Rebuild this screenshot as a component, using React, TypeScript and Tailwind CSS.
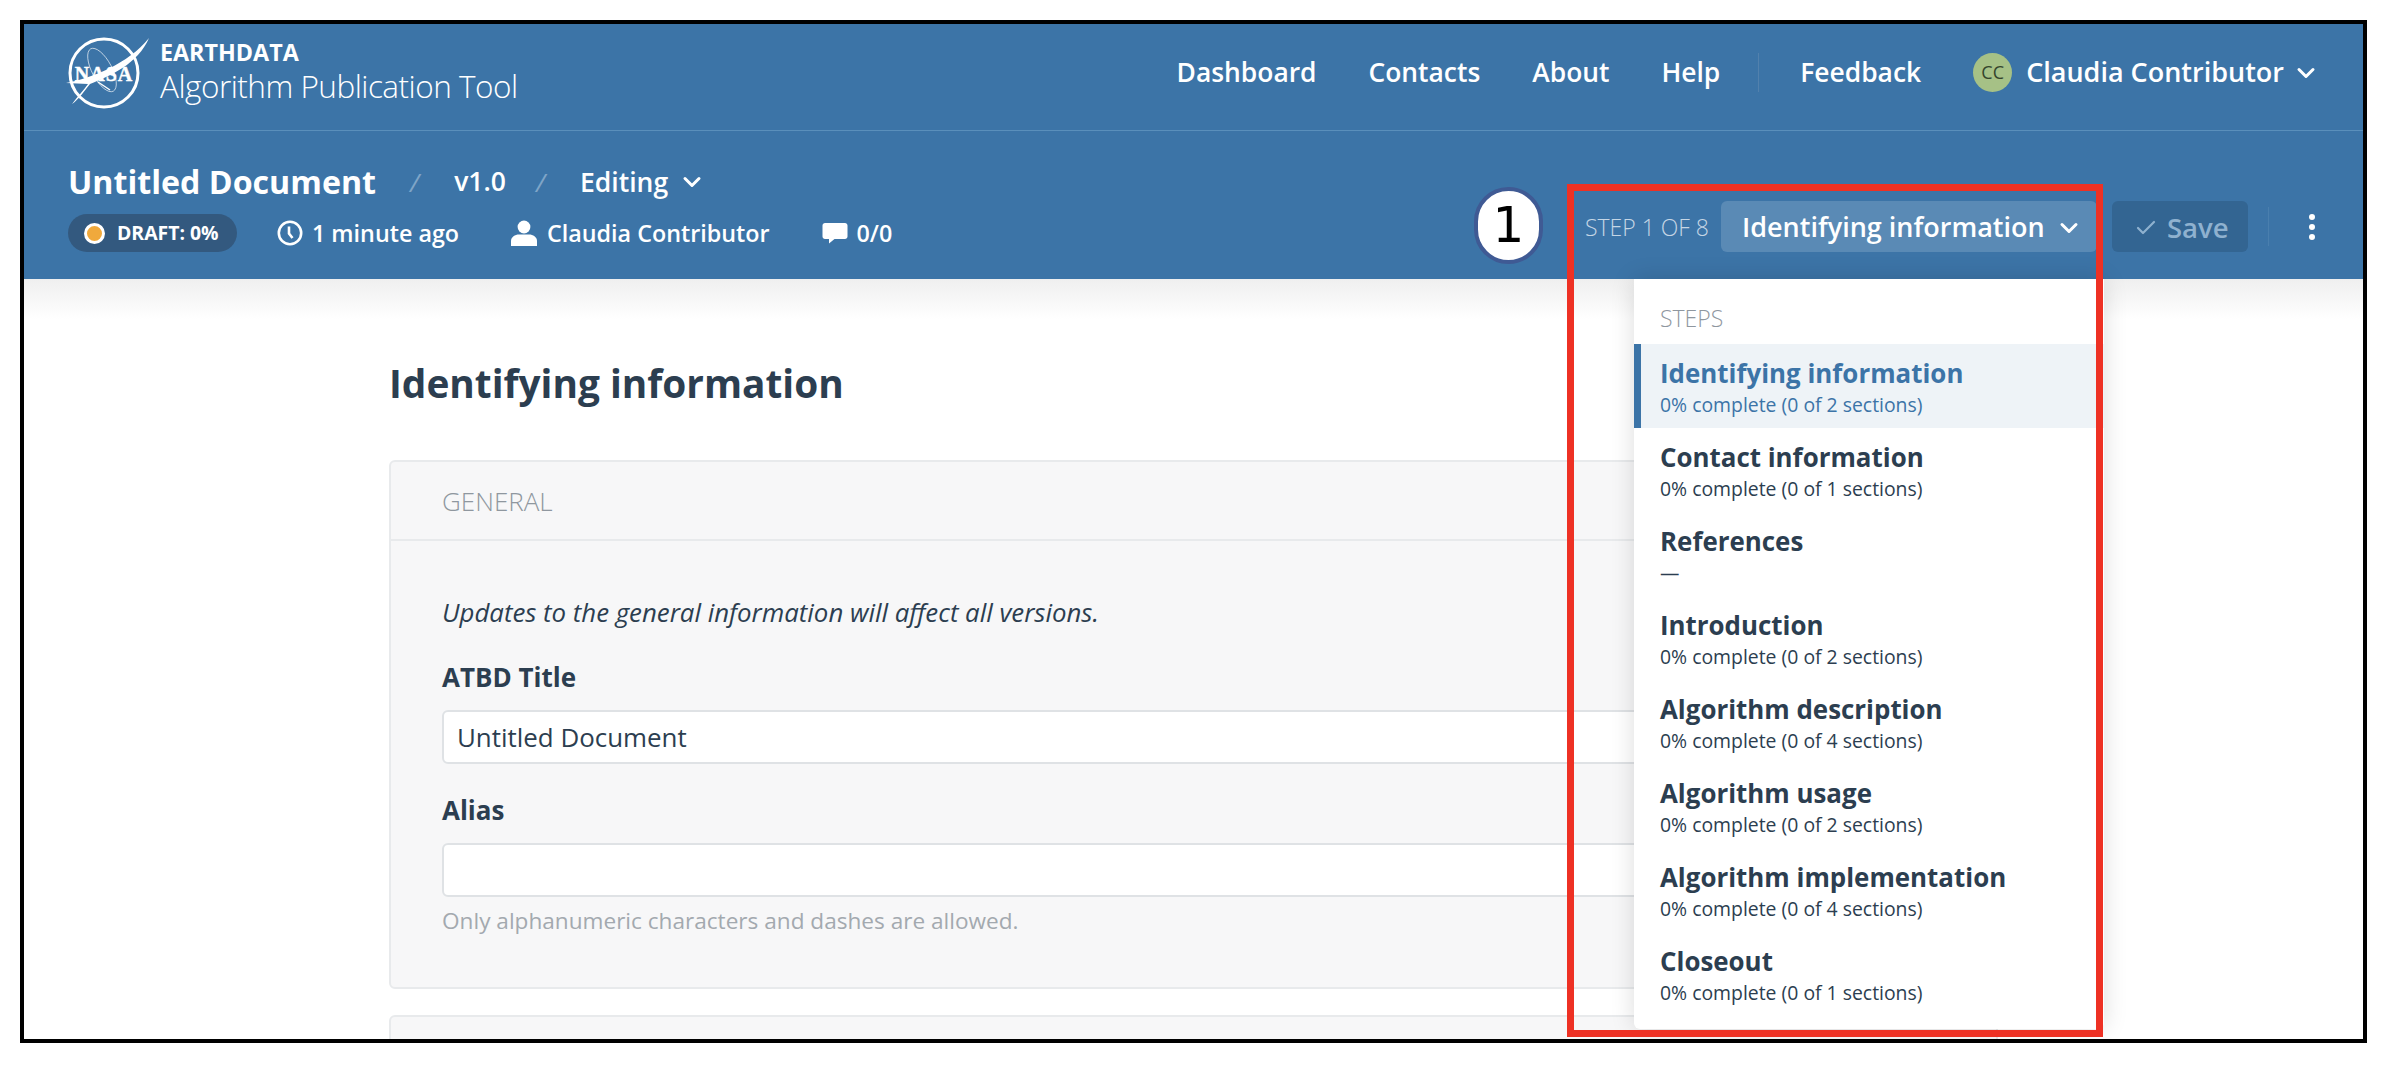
import { Check, ChevronDown } from "lucide-react";

const sans = { fontFamily: '"Open Sans", sans-serif' };

const navLinks = ["Dashboard", "Contacts", "About", "Help"];

const steps = [
  { title: "Identifying information", note: "0% complete (0 of 2 sections)", active: true },
  { title: "Contact information", note: "0% complete (0 of 1 sections)" },
  { title: "References", note: "—" },
  { title: "Introduction", note: "0% complete (0 of 2 sections)" },
  { title: "Algorithm description", note: "0% complete (0 of 4 sections)" },
  { title: "Algorithm usage", note: "0% complete (0 of 2 sections)" },
  { title: "Algorithm implementation", note: "0% complete (0 of 4 sections)" },
  { title: "Closeout", note: "0% complete (0 of 1 sections)" },
];

function NasaLogo() {
  return (
    <svg viewBox="0 0 84 74" className="h-[74px] w-[84px] shrink-0" fill="none">
      <circle cx="38" cy="37" r="34" stroke="white" strokeWidth="3" />
      <ellipse cx="36" cy="34" rx="10" ry="24" stroke="white" strokeWidth="0.8" transform="rotate(-28 36 34)" opacity="0.75" />
      <path d="M0 47 C 26 42 62 28 83 2 C 72 28 44 40 24 48 C 16 58 12 64 6 68 C 12 60 18 54 22 48 Z" fill="white" />
      <path d="M32 46 L44 54" stroke="white" strokeWidth="1.4" />
      <text x="38" y="45" textAnchor="middle" fontFamily='"Liberation Serif", serif' fontWeight="700" fontSize="20" letterSpacing="1" fill="white" stroke="white" strokeWidth="0.4">NASA</text>
    </svg>
  );
}

function ClockIcon() {
  return (
    <svg viewBox="0 0 26 26" className="h-[26px] w-[26px]" fill="none" stroke="white">
      <circle cx="13" cy="13" r="11.2" strokeWidth="2.6" />
      <path d="M12 6.5V13.5L15.5 18" strokeWidth="2.6" />
    </svg>
  );
}

function UserIcon() {
  return (
    <svg viewBox="0 0 26 26" className="h-[26px] w-[26px]" fill="white">
      <circle cx="13" cy="7" r="6.4" />
      <path d="M0 26V21C0 17 4 14.5 8 14.5H18C22 14.5 26 17 26 21V26Z" />
    </svg>
  );
}

function CommentIcon() {
  return (
    <svg viewBox="0 0 26 24" className="h-[24px] w-[26px]" fill="white">
      <path d="M3 2H23C24.4 2 25.5 3.1 25.5 4.5V15.5C25.5 16.9 24.4 18 23 18H12.5L7 22.5V18H3C1.6 18 .5 16.9 .5 15.5V4.5C.5 3.1 1.6 2 3 2Z" />
    </svg>
  );
}

function Field({ label, value, hint }: { label: string; value?: string; hint?: string }) {
  return (
    <div>
      <label className="block text-[26px] leading-[32px] font-bold text-[#2c3e50]">{label}</label>
      <div className="mt-[17px] flex h-[54px] items-center rounded-md border-2 border-[#dfe2e5] bg-white px-[13px] text-[25.9px] text-[#2c3e50]">
        {value}
      </div>
      {hint && <p className="mt-[10px] text-[22.6px] leading-[28px] text-[#a3a9af]">{hint}</p>}
    </div>
  );
}

export default function App() {
  return (
    <div className="h-[1068px] w-[2392px] overflow-hidden bg-white pt-[20px] pl-[20px]" style={sans}>
      <div className="relative h-[1023px] w-[2347px] overflow-hidden border-[4px] border-black bg-white">
        <header className="bg-[#3c74a7] text-white">
          <div className="flex h-[107px] items-center justify-between border-b border-[#5a8fbb] pr-[43px] pb-[9px] pl-[42px]">
            <div className="flex items-center gap-[11px]">
              <NasaLogo />
              <div className="-ml-[1px]">
                <div className="text-[23.3px] leading-[24px] font-bold">EARTHDATA</div>
                <div className="mt-[2px] text-[31.5px] leading-[40px] font-light -tracking-[0.5px]">Algorithm Publication Tool</div>
              </div>
            </div>
            <nav className="flex items-center text-[26.4px] font-semibold">
              <div className="flex items-center gap-[52px]">
                {navLinks.map((link) => (
                  <a key={link}>{link}</a>
                ))}
              </div>
              <div className="mr-[41px] ml-[38px] h-[39px] w-px bg-[#5281ad]" />
              <a>Feedback</a>
              <div className="ml-[52px] flex h-[39px] w-[39px] items-center justify-center rounded-full bg-[#a6c186] text-[18px] font-normal text-[#34452c]">
                CC
              </div>
              <span className="ml-[14px] text-[27px]">Claudia Contributor</span>
              <ChevronDown className="ml-[8px] h-[28px] w-[28px]" strokeWidth={2.6} />
            </nav>
          </div>

          <div className="flex h-[148px] items-start justify-between pr-[46px] pl-[44px]">
            <div>
              <div className="mt-[31px] flex h-[40px] items-center">
                <h1 className="text-[32.2px] font-bold">Untitled Document</h1>
                <span className="ml-[34px] text-[26px] text-[#7fa5c7] italic">/</span>
                <span className="ml-[35px] text-[26.5px] font-semibold">v1.0</span>
                <span className="ml-[30px] text-[26px] text-[#7fa5c7] italic">/</span>
                <span className="ml-[35px] pt-[2px] text-[26.5px] font-semibold">Editing</span>
                <ChevronDown className="ml-[10px] h-[28px] w-[28px]" strokeWidth={2.6} />
              </div>
              <div className="mt-[12px] flex items-center text-[23.3px] font-semibold">
                <div className="flex h-[38px] w-[169px] items-center rounded-full bg-[#33597f] pl-[16px]">
                  <span className="h-[21px] w-[21px] rounded-full border-[3px] border-white bg-[#f0a93c]" />
                  <span className="ml-[12px] text-[19.4px] font-bold">DRAFT: 0%</span>
                </div>
                <span className="ml-[40px]"><ClockIcon /></span>
                <span className="ml-[9px]">1 minute ago</span>
                <span className="ml-[52px]"><UserIcon /></span>
                <span className="ml-[10px]">Claudia Contributor</span>
                <span className="ml-[52px]"><CommentIcon /></span>
                <span className="ml-[9px]">0/0</span>
              </div>
            </div>

            <div className="mt-[70px] flex items-center">
              <span className="pt-[2px] text-[23px] font-light text-[#c5d6e5]">STEP 1 OF 8</span>
              <button className="ml-[12px] flex h-[51px] w-[376px] items-center rounded-md bg-[#5a8ab5] pt-[2px] pl-[21px] text-[27px] font-semibold">
                Identifying information
                <ChevronDown className="ml-[10px] h-[28px] w-[28px]" strokeWidth={2.6} />
              </button>
              <button className="ml-[15px] flex h-[51px] w-[136px] items-center rounded-md bg-[#336592] pt-[2px] pl-[22px] text-[27.5px] font-semibold text-[#8fb1cf]">
                <Check className="h-[24px] w-[24px]" strokeWidth={2.2} />
                <span className="ml-[9px]">Save</span>
              </button>
              <div className="ml-[20px] h-[39px] w-px bg-[#4a7fae]" />
              <svg viewBox="0 0 8 26" className="mr-[1px] ml-[39px] h-[26px] w-[8px]" fill="white">
                <circle cx="4" cy="3" r="3" />
                <circle cx="4" cy="13" r="3" />
                <circle cx="4" cy="23" r="3" />
              </svg>
            </div>
          </div>
        </header>

        <div className="h-[40px] bg-gradient-to-b from-[#efefef] to-white" />

        <main className="mx-auto -mt-[40px] w-[1609px]">
          <h2 className="pt-[78px] text-[38.8px] leading-[52px] font-bold text-[#2c3e50]">Identifying information</h2>

          <section className="mt-[51px] h-[529px] rounded-md border-2 border-[#e8eaec] bg-[#f7f7f8]">
            <div className="flex h-[79px] items-center border-b-2 border-[#e8eaec] px-[51px] pt-[1px] text-[26px] font-light text-[#8f979f]">
              GENERAL
            </div>
            <div className="px-[51px] pt-[55px]">
              <p className="text-[25.8px] leading-[32px] text-[#2c3e50] italic">
                Updates to the general information will affect all versions.
              </p>
              <div className="mt-[33px]">
                <Field label="ATBD Title" value="Untitled Document" />
              </div>
              <div className="mt-[30px]">
                <Field label="Alias" hint="Only alphanumeric characters and dashes are allowed." />
              </div>
            </div>
          </section>

          <section className="mt-[26px] h-[60px] rounded-md border-2 border-[#e8eaec] bg-[#f7f7f8]" />
        </main>

        <aside className="absolute top-[255px] left-[1610px] z-10 h-[750px] w-[470px] rounded-b-md bg-white shadow-[0_0_24px_rgba(0,0,0,0.14)]">
          <div className="flex h-[65px] items-center pt-[13px] pl-[26px] text-[23px] font-light text-[#8f979f]">STEPS</div>
          <ul>
            {steps.map((step) => (
              <li
                key={step.title}
                className={`h-[84px] pt-[13px] ${step.active ? "border-l-[7px] border-[#3c74a7] bg-[#eef3f7] pl-[19px] text-[#3c74a7]" : "pl-[26px] text-[#2c3e50]"}`}
              >
                <div className="text-[25.9px] leading-[32px] font-bold">{step.title}</div>
                <div className="mt-[4px] text-[19.4px] leading-[24px]">{step.note}</div>
              </li>
            ))}
          </ul>
        </aside>

        <div className="pointer-events-none absolute top-[160px] left-[1543px] z-20 h-[853px] w-[536px] border-[7px] border-[#ee3124]" />

        <div className="absolute top-[163px] left-[1450px] z-20 flex h-[77px] w-[69px] items-center justify-center rounded-full border-[4px] border-[#3f5a94] bg-white text-[50px] text-black" style={{ fontFamily: '"DejaVu Sans", sans-serif' }}>
          1
        </div>
      </div>
    </div>
  );
}
